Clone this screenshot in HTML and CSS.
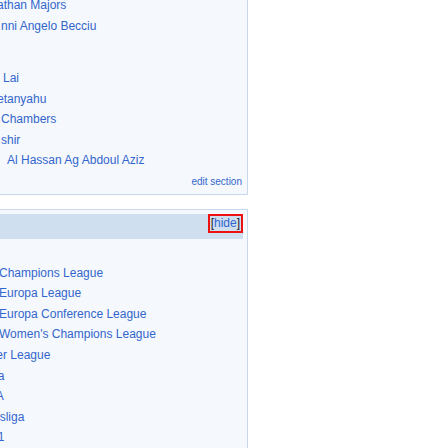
FILE: index.html
```html
<!DOCTYPE html>
<html lang="en">
<head>
<meta charset="utf-8">
<title>Sections</title>
<link rel="stylesheet" href="styles.css">
</head>
<body>
<div class="page">
  <div class="col">
    <section class="panel panel-top">
      <ul class="list list-a">
        <li class="i-m3">athan Majors</li>
        <li class="i-1">nni Angelo Becciu</li>
      </ul>
      <ul class="list list-b">
        <li class="i-3">Lai</li>
        <li class="i-m3">etanyahu</li>
        <li class="i-1">Chambers</li>
        <li class="i-1">shir</li>
        <li class="i-7">Al Hassan Ag Abdoul Aziz</li>
      </ul>
      <div class="edit"><a href="#">edit section</a></div>
    </section>
    <section class="panel panel-second">
      <div class="bar">
        <span class="hide">[<a href="#">hide</a>]</span>
      </div>
      <ul class="list leagues">
        <li>UEFA Champions League</li>
        <li>UEFA Europa League</li>
        <li>UEFA Europa Conference League</li>
        <li>UEFA Women's Champions League</li>
        <li>Premier League</li>
        <li>La Liga</li>
        <li>Serie A</li>
        <li>Bundesliga</li>
        <li>Ligue 1</li>
      </ul>
    </section>
  </div>
</div>
</body>
</html>
```

FILE: styles.css
```css
html, body {
  margin: 0;
  padding: 0;
  background: #ffffff;
  overflow: hidden;
}
body {
  font-family: "Liberation Sans", Arial, sans-serif;
  font-size: 12px;
  color: #202122;
}
a {
  color: #3366cc;
  text-decoration: none;
}
.page {
  display: flex;
  width: 448px;
  height: 448px;
  overflow: hidden;
}
.col {
  width: 248px;
  display: flex;
  flex-direction: column;
}
.panel {
  background: #f5f9fd;
  border-right: 1px solid #c8d8ea;
}
.panel-top {
  border-bottom: 1px solid #c8d8ea;
  height: 194px;
  box-sizing: border-box;
  height: 195px;
  overflow: hidden;
  padding: 0 5px 0 0;
}
.list {
  list-style: none;
  margin: 0;
  padding: 0;
  line-height: 20.5px;
  color: #3366cc;
  white-space: nowrap;
}
.list-a {
  margin-top: -5px;
}
.list-b {
  margin-top: 32px;
}
.i-m3 { margin-left: -3px; }
.i-1 { margin-left: 1px; }
.i-3 { margin-left: 3px; }
.i-7 { margin-left: 7px; }
.edit {
  text-align: right;
  font-size: 10px;
  line-height: 12px;
  margin-top: 5px;
}
.panel-second {
  margin-top: 14px;
  border-top: 1px solid #c8d8ea;
  padding: 4px 4px 0 0;
  flex: 1;
}
.bar {
  background: #cfdff0;
  height: 25px;
  display: flex;
  justify-content: flex-end;
  align-items: flex-start;
}
.hide {
  border: 2px solid #ee1111;
  padding: 0 1px;
  line-height: 15px;
  font-size: 12px;
  color: #202122;
}
.leagues {
  margin-top: 24px;
  margin-left: -35px;
  line-height: 20.6px;
}
```
